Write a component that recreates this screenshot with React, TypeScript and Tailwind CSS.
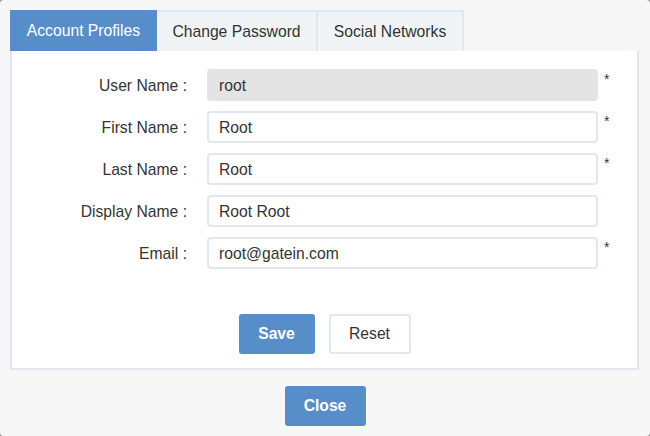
import React from "react";

type Field = {
  label: string;
  value: string;
  required: boolean;
  disabled?: boolean;
};

const fields: Field[] = [
  { label: "User Name :", value: "root", required: true, disabled: true },
  { label: "First Name :", value: "Root", required: true },
  { label: "Last Name :", value: "Root", required: true },
  { label: "Display Name :", value: "Root Root", required: false },
  { label: "Email :", value: "root@gatein.com", required: true },
];

const tabs = [
  { name: "Account Profiles", width: "w-[147px]", active: true },
  { name: "Change Password", width: "w-[161px]", active: false },
  { name: "Social Networks", width: "w-[146px]", active: false },
];

const FieldRow = ({ field }: { field: Field }) => (
  <div className="flex items-start h-[32px]">
    <label className="w-[175px] text-right leading-[34px] text-[15.7px] text-[#333]">
      {field.label}
    </label>
    <div
      className={
        field.disabled
          ? "ml-[20px] w-[391px] h-[32px] rounded-[4px] border-2 border-[#e4e4e4] bg-[#e4e4e4] pl-[10px] leading-[30px] text-[15.7px] text-[#333]"
          : "ml-[20px] w-[391px] h-[32px] rounded-[4px] border-2 border-[#e1e7ee] bg-white pl-[10px] leading-[30px] text-[15.7px] text-[#333]"
      }
    >
      {field.value}
    </div>
    {field.required && (
      <span className="ml-[6px] mt-[3px] text-[14px] leading-[14px] text-[#333]">*</span>
    )}
  </div>
);

export default function App() {
  return (
    <div
      className="w-[650px] h-[436px] bg-[#9a9a9a]"
      style={{ fontFamily: '"Liberation Sans", Arial, sans-serif' }}
    >
      <div className="w-full h-full rounded-[4px] bg-[#f7f7f7] pt-[10px] px-[10px] flex flex-col">
        <div className="flex h-[41px]">
          {tabs.map((t) =>
            t.active ? (
              <div
                key={t.name}
                className={`${t.width} h-[41px] flex items-center justify-center bg-[#578dc9] text-white text-[15.7px]`}
              >
                {t.name}
              </div>
            ) : (
              <div
                key={t.name}
                className={`${t.width} h-[41px] flex items-center justify-center bg-[#f0f4f7] border-2 border-b-0 border-l-0 border-[#e1e7ee] text-[#333] text-[15.7px]`}
              >
                {t.name}
              </div>
            )
          )}
        </div>
        <div className="w-[629px] h-[319px] bg-white border-2 border-t-0 border-[#e1e7ee] flex flex-col">
          <div className="flex flex-col gap-[10px] pt-[18px]">
            {fields.map((f) => (
              <FieldRow key={f.label} field={f} />
            ))}
          </div>
          <div className="flex justify-center gap-[14px] mt-[45px]">
            <button className="w-[76px] h-[40px] rounded-[3px] bg-[#578dc9] text-white font-bold text-[15.7px]">
              Save
            </button>
            <button className="w-[82px] h-[40px] rounded-[3px] bg-white border-2 border-[#e1e7ee] text-[#333] text-[15.7px]">
              Reset
            </button>
          </div>
        </div>
        <div className="flex justify-center mt-[16px]">
          <button className="w-[81px] h-[40px] rounded-[3px] bg-[#578dc9] text-white font-bold text-[15.7px]">
            Close
          </button>
        </div>
      </div>
    </div>
  );
}
